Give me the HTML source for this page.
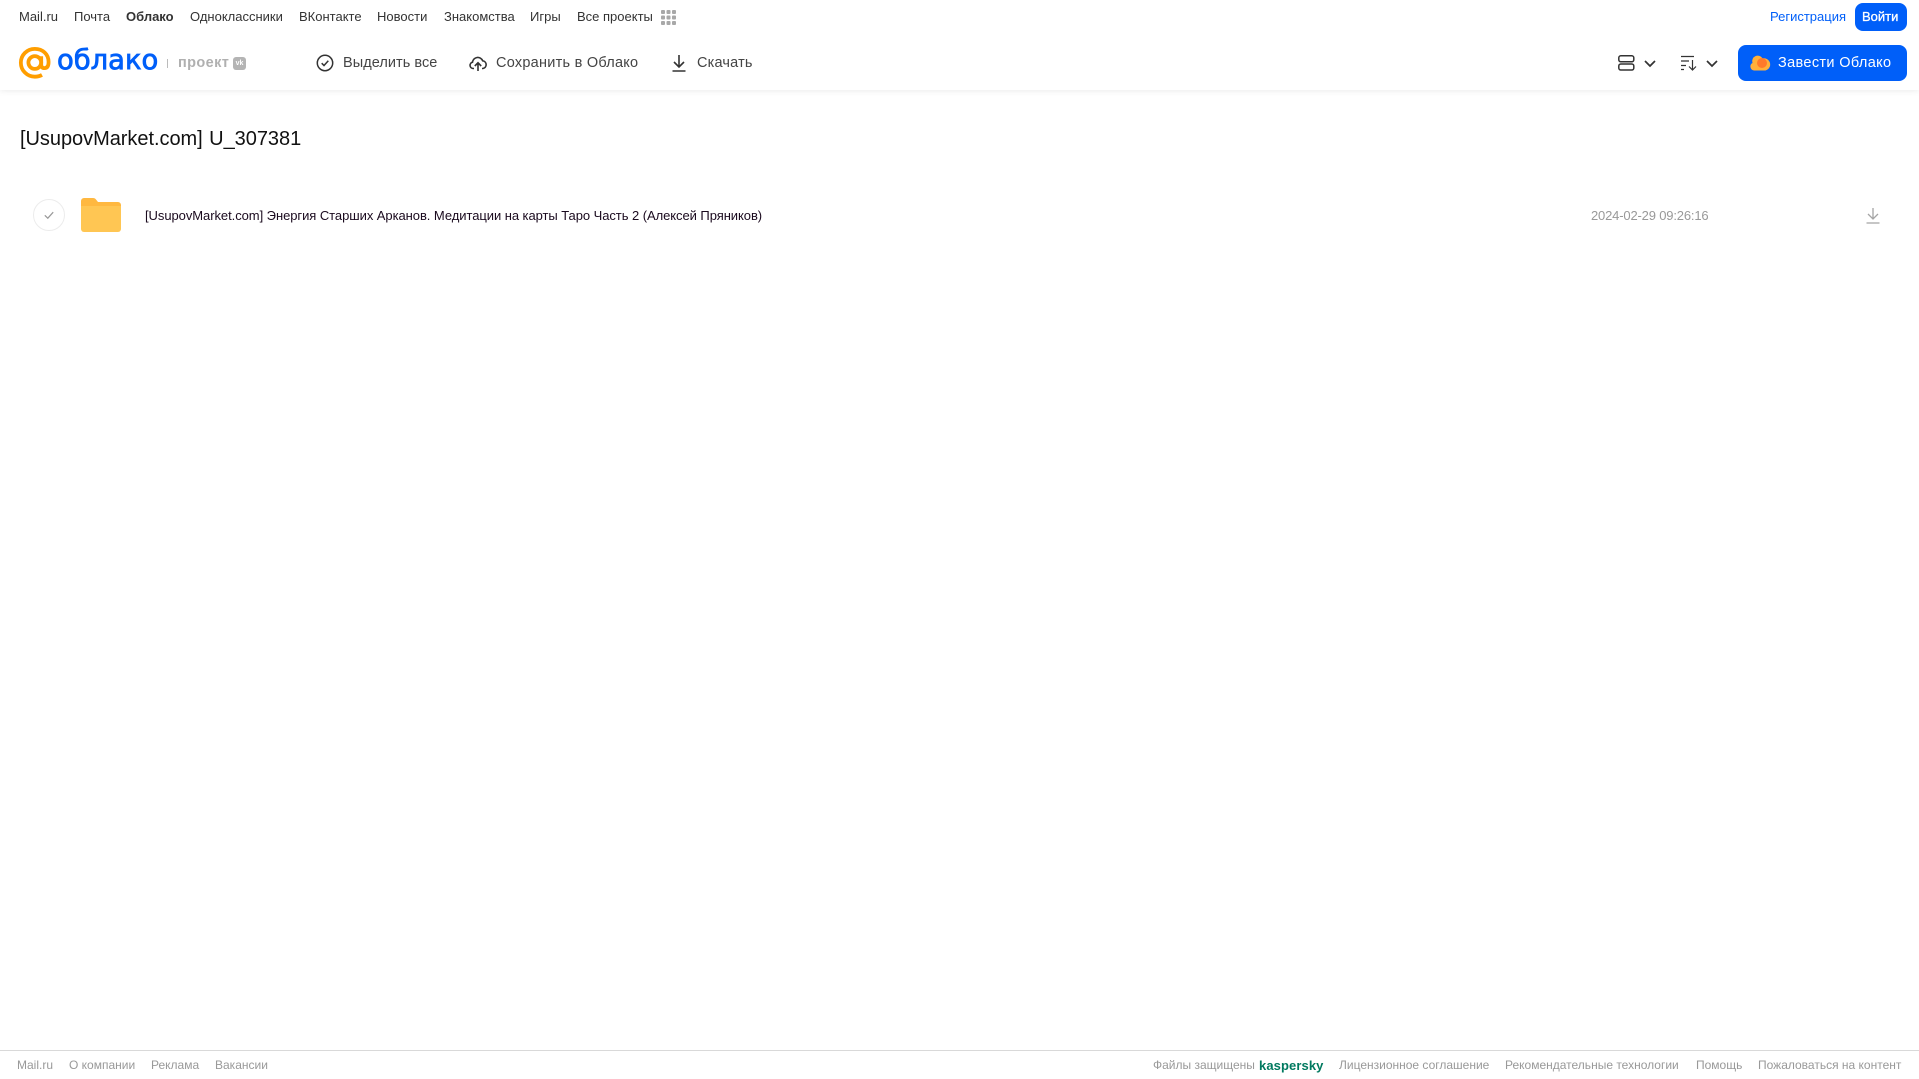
<!DOCTYPE html>
<html lang="ru"><head><meta charset="utf-8"><title>Облако</title>
<style>
html,body{margin:0;padding:0;background:#fff}
body{width:1919px;height:1079px;position:relative;overflow:hidden;font-family:"Liberation Sans",Arial,sans-serif}
a,span,h1{position:absolute;white-space:nowrap;text-decoration:none;margin:0;font-weight:normal}
svg{position:absolute;overflow:visible}
.n{top:9px;font-size:13px;line-height:15px;color:#333}
.t{top:54px;font-size:14.5px;line-height:18px;color:#444}
.f{top:1058px;font-size:12px;line-height:15px;color:#999}
header{position:absolute;left:0;top:0;width:1919px;height:90px;background:#fff;box-shadow:0 1px 6px rgba(0,0,0,.08)}
footer{position:absolute;left:0;top:1050px;width:1919px;height:1px;background:#d9d9d9}
.btn{position:absolute;background:#005ff9;border-radius:8px}
</style></head><body>
<header>
<a class="n" style="left:19px">Mail.ru</a>
<a class="n" style="left:74px">Почта</a>
<a class="n" style="left:126px;font-weight:bold">Облако</a>
<a class="n" style="left:190px">Одноклассники</a>
<a class="n" style="left:299px">ВКонтакте</a>
<a class="n" style="left:377px">Новости</a>
<a class="n" style="left:444px">Знакомства</a>
<a class="n" style="left:530px">Игры</a>
<a class="n" style="left:577px">Все проекты</a>
<svg style="left:661px;top:10px" width="15" height="15" fill="#a8a8a8"><rect x="0" y="0" width="4" height="4" rx="1"/><rect x="5.5" y="0" width="4" height="4" rx="1"/><rect x="11" y="0" width="4" height="4" rx="1"/><rect x="0" y="5.5" width="4" height="4" rx="1"/><rect x="5.5" y="5.5" width="4" height="4" rx="1"/><rect x="11" y="5.5" width="4" height="4" rx="1"/><rect x="0" y="11" width="4" height="4" rx="1"/><rect x="5.5" y="11" width="4" height="4" rx="1"/><rect x="11" y="11" width="4" height="4" rx="1"/></svg>
<a class="n" style="left:1770px;color:#005ff9">Регистрация</a>
<a class="btn" style="left:1855px;top:3px;width:52px;height:28px"></a>
<a class="n" style="left:1862px;color:#fff;-webkit-text-stroke:.3px #fff">Войти</a>

<svg style="left:19px;top:47px" width="32" height="32" viewBox="0 0 33 33" fill="none" stroke="#ff9e00" stroke-width="3.9"><circle cx="16.3" cy="16" r="6.6"/><path d="M22.9 9.5V18q0 3.8 3.4 3.8 4.2 0 4.2-6.4C30.5 7.500 24.500 1.900 16.300 1.900 8.300 1.900 1.900 8.200 1.900 16.200S8.300 30.600 16.300 30.600q4.200 0 7.400-1.800"/></svg>
<span style="left:57px;top:43px;font-size:27.4px;line-height:36px;color:#005ff9;font-family:'DejaVu Sans',sans-serif;-webkit-text-stroke:.8px #005ff9">облако</span>
<span style="left:167px;top:59px;width:1px;height:9px;background:#bbb"></span>
<span style="left:178px;top:54px;font-size:14.5px;line-height:18px;color:#b0b0b0;font-weight:bold;letter-spacing:.4px">проект</span>
<span style="left:233px;top:57px;width:13px;height:13px;border-radius:3px;background:#b4b4b4;color:#fff;font-size:7px;line-height:13px;text-align:center;font-weight:bold">vk</span>

<svg style="left:316px;top:54px" width="18" height="18" viewBox="0 0 18 18" fill="none" stroke="#333" stroke-width="1.5"><circle cx="9" cy="9" r="7.7"/><path d="M5.7 9.2 8 11.500 12.300 6.800"/></svg>
<a class="t" style="left:343px;letter-spacing:.05px">Выделить все</a>
<svg style="left:469px;top:54px" width="18" height="18" viewBox="0 0 18 18" fill="none" stroke="#333" stroke-width="1.6"><path d="M5 14.500H4A3.200 3.200 0 0 1 3.500 8.200 5.300 5.300 0 0 1 13.700 6.800 3.900 3.900 0 0 1 14 14.500H13"/><path d="M9 17V9M5.800 12 9 8.800 12.200 12"/></svg>
<a class="t" style="left:496px;letter-spacing:.25px">Сохранить в Облако</a>
<svg style="left:671px;top:54px" width="16" height="18" viewBox="0 0 16 18" fill="none" stroke="#333" stroke-width="1.6"><path d="M8 1V12.500M3 8 8 13 13 8M1.500 17H14.500"/></svg>
<a class="t" style="left:697px;letter-spacing:.18px">Скачать</a>

<svg style="left:1618px;top:55px" width="17" height="16" viewBox="0 0 17 16" fill="none" stroke="#333" stroke-width="1.5"><rect x=".8" y=".8" width="15" height="6" rx="2"/><rect x=".8" y="9" width="15" height="6" rx="2"/></svg>
<svg style="left:1644px;top:60px" width="12" height="7" viewBox="0 0 12 7" fill="none" stroke="#333" stroke-width="1.7"><path d="M1 1 6 6 11 1"/></svg>
<svg style="left:1681px;top:55px" width="16" height="16" viewBox="0 0 16 16" fill="none" stroke="#333" stroke-width="1.2"><path d="M0 1.500H13M0 6H8M0 10.500H5M0 14.500H3M11.500 5V14.500M8 11.500 11.500 15 15 11.500"/></svg>
<svg style="left:1706px;top:60px" width="12" height="7" viewBox="0 0 12 7" fill="none" stroke="#333" stroke-width="1.7"><path d="M1 1 6 6 11 1"/></svg>
<a class="btn" style="left:1738px;top:45px;width:169px;height:36px"></a>
<svg style="left:1750px;top:54px" width="20" height="17" viewBox="0 0 20 17"><path fill="#ffb03a" d="M4 16.500A4 4 0 0 1 2.500 9 5.500 5.500 0 0 1 12.500 4.500 6 6 0 0 1 15.500 16.500Z"/><circle cx="12" cy="9" r="5" fill="#ff7a2a"/></svg>
<a class="t" style="left:1778px;color:#fff;letter-spacing:.35px">Завести Облако</a>
</header>

<h1 style="left:20px;top:127px;font-size:20px;line-height:24px;color:#111;word-spacing:1px;letter-spacing:-.04px">[UsupovMarket.com] U_307381</h1>

<svg style="left:33px;top:199px" width="32" height="32" viewBox="0 0 32 32" fill="none"><circle cx="16" cy="16" r="15.5" stroke="#ececec"/><path d="M11.800 16.300 14.800 19.200 20.200 13.200" stroke="#999" stroke-width="1.2"/></svg>
<svg style="left:81px;top:198px" width="40" height="34" viewBox="0 0 40 34"><path fill="#ffb840" d="M0 3a3 3 0 0 1 3-3H12q2 0 3 1.500L17 4H37a3 3 0 0 1 3 3V12H0Z"/><path fill="#ffc653" d="M0 8H40V31a3 3 0 0 1-3 3H3a3 3 0 0 1-3-3Z"/></svg>
<a style="left:145px;top:208px;font-size:13px;line-height:15px;letter-spacing:-.06px;color:#1a0a1e">[UsupovMarket.com] Энергия Старших Арканов. Медитации на карты Таро Часть 2 (Алексей Пряников)</a>
<span style="left:1591px;top:208px;font-size:13px;line-height:15px;letter-spacing:-.17px;color:#999">2024-02-29 09:26:16</span>
<svg style="left:1866px;top:207px" width="14" height="17" viewBox="0 0 14 17" fill="none" stroke="#a5a5a5" stroke-width="1.3"><path d="M7 1V11.500M2 7 7 12 12 7M.5 16H13.500"/></svg>

<footer></footer>
<a class="f" style="left:17px">Mail.ru</a>
<a class="f" style="left:69px">О компании</a>
<a class="f" style="left:151px">Реклама</a>
<a class="f" style="left:215px">Вакансии</a>
<span class="f" style="left:1153px">Файлы защищены</span>
<span class="f" style="left:1259px;color:#00795f;font-weight:bold;font-size:13px;letter-spacing:.1px">kaspersky</span>
<a class="f" style="left:1339px">Лицензионное соглашение</a>
<a class="f" style="left:1505px">Рекомендательные технологии</a>
<a class="f" style="left:1696px">Помощь</a>
<a class="f" style="left:1758px">Пожаловаться на контент</a>
</body></html>
